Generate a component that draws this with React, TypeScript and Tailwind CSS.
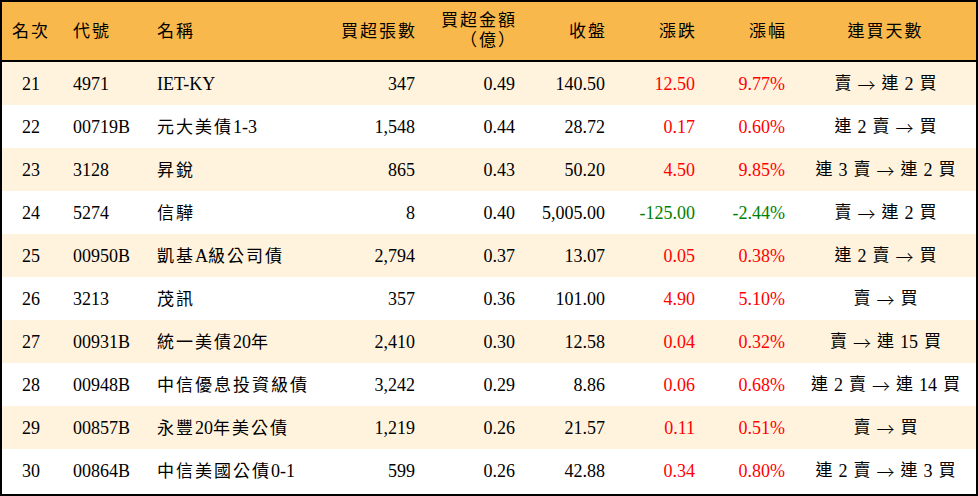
const rows = [
  { rank: 21, code: "4971", name: "IET-KY", vol: "347", amt: "0.49", close: "140.50", chg: "12.50", pct: "9.77%", streak: "賣 → 連 2 買" },
  { rank: 22, code: "00719B", name: "元大美債1-3", vol: "1,548", amt: "0.44", close: "28.72", chg: "0.17", pct: "0.60%", streak: "連 2 賣 → 買" },
  { rank: 23, code: "3128", name: "昇銳", vol: "865", amt: "0.43", close: "50.20", chg: "4.50", pct: "9.85%", streak: "連 3 賣 → 連 2 買" },
  { rank: 24, code: "5274", name: "信驊", vol: "8", amt: "0.40", close: "5,005.00", chg: "-125.00", pct: "-2.44%", streak: "賣 → 連 2 買" },
  { rank: 25, code: "00950B", name: "凱基A級公司債", vol: "2,794", amt: "0.37", close: "13.07", chg: "0.05", pct: "0.38%", streak: "連 2 賣 → 買" },
  { rank: 26, code: "3213", name: "茂訊", vol: "357", amt: "0.36", close: "101.00", chg: "4.90", pct: "5.10%", streak: "賣 → 買" },
  { rank: 27, code: "00931B", name: "統一美債20年", vol: "2,410", amt: "0.30", close: "12.58", chg: "0.04", pct: "0.32%", streak: "賣 → 連 15 買" },
  { rank: 28, code: "00948B", name: "中信優息投資級債", vol: "3,242", amt: "0.29", close: "8.86", chg: "0.06", pct: "0.68%", streak: "連 2 賣 → 連 14 買" },
  { rank: 29, code: "00857B", name: "永豐20年美公債", vol: "1,219", amt: "0.26", close: "21.57", chg: "0.11", pct: "0.51%", streak: "賣 → 買" },
  { rank: 30, code: "00864B", name: "中信美國公債0-1", vol: "599", amt: "0.26", close: "42.88", chg: "0.34", pct: "0.80%", streak: "連 2 賣 → 連 3 買" },
];

const grid =
  "grid grid-cols-[58px_85px_185px_95px_100px_90px_90px_90px_181px] items-center";

// CJK runs get a little spacing, latin runs stay tight
function Mixed({ text }: { text: string }) {
  const parts = text.split(/([\u3400-\u9fff]+)/).filter(Boolean);
  return (
    <>
      {parts.map((p, i) =>
        /[\u3400-\u9fff]/.test(p) ? (
          <span key={i} className="text-[17px] tracking-[2px]">
            {p}
          </span>
        ) : (
          <span key={i}>{p}</span>
        )
      )}
    </>
  );
}

function Streak({ text }: { text: string }) {
  const tokens = text.split(" ");
  return (
    <div className="flex justify-center items-center gap-[6px]">
      {tokens.map((t, i) =>
        t === "→" ? (
          <span key={i} className="font-['Noto_Sans_CJK_TC',sans-serif] text-[18px] font-light">
            →
          </span>
        ) : /\d/.test(t) ? (
          <span key={i} className="text-[18px]">{t}</span>
        ) : (
          <span key={i} className="text-[17px]">{t}</span>
        )
      )}
    </div>
  );
}

export default function App() {
  return (
    <div className="w-[978px] h-[496px] bg-white border-2 border-black font-['Liberation_Serif','Noto_Sans_CJK_TC',serif] text-[18px] text-black leading-none">
      <div className={`${grid} h-[60px] bg-[#f9b84b] border-b-2 border-black text-[17px] tracking-[2px]`}>
        <div className="text-center">名次</div>
        <div className="pl-[13px]">代號</div>
        <div className="pl-[12px]">名稱</div>
        <div className="text-right pr-[8px]">買超張數</div>
        <div className="text-right pr-[8px] leading-[20px]">
          <div>買超金額</div>
          <div>（億）</div>
        </div>
        <div className="text-right pr-[8px]">收盤</div>
        <div className="text-right pr-[8px]">漲跌</div>
        <div className="text-right pr-[8px]">漲幅</div>
        <div className="text-center">連買天數</div>
      </div>
      {rows.map((r, i) => {
        const up = !r.chg.startsWith("-");
        const color = up ? "text-[#ff0000]" : "text-[#008000]";
        return (
          <div
            key={r.rank}
            className={`${grid} h-[43px] ${i % 2 === 0 ? "bg-[#fff3de]" : "bg-white"}`}
          >
            <div className="text-center">{r.rank}</div>
            <div className="pl-[13px]">{r.code}</div>
            <div className="pl-[12px] whitespace-nowrap">
              <Mixed text={r.name} />
            </div>
            <div className="text-right pr-[10px]">{r.vol}</div>
            <div className="text-right pr-[10px]">{r.amt}</div>
            <div className="text-right pr-[10px]">{r.close}</div>
            <div className={`text-right pr-[10px] ${color}`}>{r.chg}</div>
            <div className={`text-right pr-[10px] ${color}`}>{r.pct}</div>
            <Streak text={r.streak} />
          </div>
        );
      })}
    </div>
  );
}
